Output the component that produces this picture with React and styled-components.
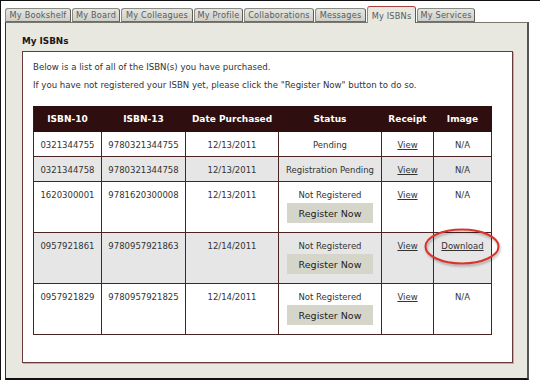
import React from "react";
import styled, { createGlobalStyle } from "styled-components";

const Global = createGlobalStyle`
  html, body { margin: 0; padding: 0; background: #fff; }
  body { font-family: "DejaVu Sans", Verdana, sans-serif; }
`;

const Frame = styled.div`
  width: 540px;
  height: 380px;
  box-sizing: border-box;
  border-top: 1px solid #111;
  border-left: 1px solid #111;
  padding: 4px 0 0 4px;
  overflow: hidden;
  background: #fff;
  display: flex;
  flex-direction: column;
`;

const TabBar = styled.div`
  display: flex;
  align-items: flex-end;
  gap: 1px;
  height: 17px;
  position: relative;
  z-index: 2;
`;

const Tab = styled.div`
  width: ${(p) => p.$w}px;
  height: ${(p) => (p.$active ? 17 : 14)}px;
  box-sizing: border-box;
  border: 1px solid #8a8a84;
  border-bottom: ${(p) => (p.$active ? "none" : "1px solid #6d6d68")};
  border-top: 1px solid ${(p) => (p.$active ? "#a8403e" : "#8a8a84")};
  border-right-color: #5f5f5a;
  border-radius: 3px 3px 0 0;
  background: ${(p) =>
    p.$active ? "#e8e8e0" : "linear-gradient(#e6e6e0, #cfcfc8)"};
  color: #5a5a5a;
  font-size: 8.2px;
  line-height: ${(p) => (p.$active ? 15 : 12)}px;
  padding-top: ${(p) => (p.$active ? 2 : 0)}px;
  text-align: center;
  white-space: nowrap;
  letter-spacing: 0.2px;
  margin-bottom: ${(p) => (p.$active ? -1 : 0)}px;
`;

const Panel = styled.div`
  width: 524px;
  flex: 1;
  box-sizing: border-box;
  background: #e8e8e0;
  border-top: 1px solid #77776f;
  border-left: 1px solid #333;
  border-right: 2px solid #555;
  border-bottom: 2px solid #111;
  padding: 12px 14px 14px 16px;
  position: relative;
  z-index: 1;
`;

const Heading = styled.div`
  font-weight: bold;
  font-size: 8.8px;
  color: #1e1414;
  line-height: 12px;
  margin-bottom: 4px;
`;

const Box = styled.div`
  width: 491px;
  height: 312px;
  box-sizing: border-box;
  background: #fff;
  border: 1px solid #6a3838;
  box-shadow: 1px 1px 0 #b9b0b0;
  padding: 9px 20px 0 10px;
`;

const Para = styled.p`
  margin: 0 0 6px;
  font-size: 8.6px;
  line-height: 12px;
  color: #333;
`;

const Table = styled.table`
  margin-top: 15px;
  width: 458px;
  border-collapse: collapse;
  table-layout: fixed;
  border: 1px solid #4a2424;
  font-size: 8.5px;
  color: #333;
`;

const Th = styled.th`
  background: #2e0e0e;
  color: #fff;
  font-weight: bold;
  font-size: 9px;
  height: 24px;
  padding: 0;
  line-height: 12px;
  border: 1px solid #2e0e0e;
  border-left: 1px solid #3d1a1a;
`;

const Row = styled.tr`
  background: ${(p) => (p.$alt ? "#e6e6e6" : "#fff")};
`;

const Td = styled.td`
  border: 1px solid #4a2424;
  text-align: center;
  vertical-align: top;
  padding: 7px 2px 5px;
  line-height: 12px;
  position: relative;
`;

const Link = styled.a`
  color: #333;
  text-decoration: underline;
  cursor: pointer;
`;

const Button = styled.button`
  display: block;
  margin: 2px auto 4px;
  width: 86px;
  height: 20px;
  border: none;
  background: #d5d5ca;
  color: #222;
  font-family: "DejaVu Sans", Verdana, sans-serif;
  font-size: 9.5px;
  padding: 0;
`;

const Circle = styled.svg`
  position: absolute;
  left: -10px;
  top: -5px;
  width: 76px;
  height: 37px;
  overflow: visible;
  pointer-events: none;
  filter: drop-shadow(1px 2px 1px rgba(0, 0, 0, 0.28));
`;

const tabs = [
  ["My Bookshelf", 66],
  ["My Board", 48],
  ["My Colleagues", 72],
  ["My Profile", 49],
  ["Collaborations", 70],
  ["Messages", 51],
  ["My ISBNs", 49, true],
  ["My Services", 58],
];

const rows = [
  { i10: "0321344755", i13: "9780321344755", date: "12/13/2011", status: "Pending", image: "N/A" },
  { i10: "0321344758", i13: "9780321344758", date: "12/13/2011", status: "Registration Pending", image: "N/A" },
  { i10: "1620300001", i13: "9781620300008", date: "12/13/2011", status: "Not Registered", reg: true, image: "N/A" },
  { i10: "0957921861", i13: "9780957921863", date: "12/14/2011", status: "Not Registered", reg: true, image: "Download" },
  { i10: "0957921829", i13: "9780957921825", date: "12/14/2011", status: "Not Registered", reg: true, image: "N/A" },
];

const widths = [68, 84, 93, 103, 52, 58];

export default function App() {
  return (
    <>
      <Global />
      <Frame>
        <TabBar>
          {tabs.map(([label, w, active]) => (
            <Tab key={label} $w={w} $active={active}>
              {label}
            </Tab>
          ))}
        </TabBar>
        <Panel>
          <Heading>My ISBNs</Heading>
          <Box>
            <Para>Below is a list of all of the ISBN(s) you have purchased.</Para>
            <Para>
              If you have not registered your ISBN yet, please click the "Register Now" button to do so.
            </Para>
            <Table>
              <colgroup>
                {widths.map((w, i) => (
                  <col key={i} style={{ width: w }} />
                ))}
              </colgroup>
              <thead>
                <tr>
                  <Th>ISBN-10</Th>
                  <Th>ISBN-13</Th>
                  <Th>Date Purchased</Th>
                  <Th>Status</Th>
                  <Th>Receipt</Th>
                  <Th>Image</Th>
                </tr>
              </thead>
              <tbody>
                {rows.map((r, i) => (
                  <Row key={r.i10} $alt={i % 2 === 1}>
                    <Td>{r.i10}</Td>
                    <Td>{r.i13}</Td>
                    <Td>{r.date}</Td>
                    <Td>
                      {r.status}
                      {r.reg && <Button>Register Now</Button>}
                    </Td>
                    <Td>
                      <Link>View</Link>
                    </Td>
                    <Td>
                      {r.image === "Download" ? (
                        <>
                          <Link>Download</Link>
                          <Circle viewBox="0 0 76 37">
                            <ellipse cx="38" cy="18.5" rx="36.5" ry="17" fill="none" stroke="#d8342b" strokeWidth="2" />
                          </Circle>
                        </>
                      ) : (
                        r.image
                      )}
                    </Td>
                  </Row>
                ))}
              </tbody>
            </Table>
          </Box>
        </Panel>
      </Frame>
    </>
  );
}
